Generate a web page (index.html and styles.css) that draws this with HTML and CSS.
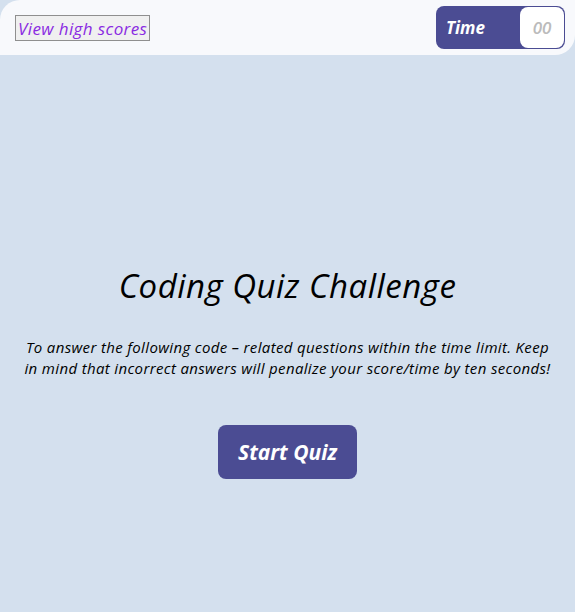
FILE: index.html
```html
<!DOCTYPE html>
<html>
<head>
<meta charset="utf-8">
<link rel="stylesheet" href="styles.css">
</head>
<body>
<header class="top">
  <button class="scores">View high scores</button>
  <div class="timer">
    <span class="timer-label">Time</span>
    <span class="timer-value">00</span>
  </div>
</header>
<main class="intro">
  <h1 class="title">Coding Quiz Challenge</h1>
  <p class="desc">To answer the following code – related questions within the time limit. Keep in mind that incorrect answers will penalize your score/time by ten seconds!</p>
  <button class="start">Start Quiz</button>
</main>
</body>
</html>
```
FILE: styles.css
```css
html, body {
  margin: 0;
  padding: 0;
}
body {
  background: #d4e0ee;
  font-family: "Open Sans", Lato, sans-serif;
  font-style: italic;
  height: 612px;
}
.top {
  display: flex;
  justify-content: space-between;
  align-items: center;
  height: 55px;
  box-sizing: border-box;
  padding: 0 10px 0 15px;
  background: #f8f9fc;
  border-radius: 20px 0 20px 0;
}
.scores {
  font-family: inherit;
  font-style: italic;
  font-size: 17px;
  letter-spacing: 0.4px;
  color: #8a2be2;
  background: #f0f0f0;
  border: 1px solid #8f8f8f;
  padding: 0 2px;
  height: 26px;
  margin-top: 1px;
}
.timer {
  display: flex;
  align-items: stretch;
  background: #4b4c93;
  border-radius: 8px;
  height: 43px;
  width: 129px;
  box-sizing: border-box;
  padding: 1px;
}
.timer-label {
  flex: 1;
  display: flex;
  align-items: center;
  padding-left: 9px;
  color: #fff;
  font-weight: bold;
  font-size: 17px;
}
.timer-value {
  width: 44px;
  display: flex;
  align-items: center;
  justify-content: center;
  background: #fff;
  border-radius: 8px;
  color: #bbb;
  font-size: 17px;
  font-weight: 600;
}
.intro {
  text-align: center;
  padding: 208px 20px 0;
}
.title {
  margin: 0;
  font-size: 33px;
  letter-spacing: 0.5px;
  font-weight: normal;
  color: #000;
  line-height: 46px;
}
.desc {
  margin: 28px 0 0;
  font-size: 15px;
  letter-spacing: 0.35px;
  line-height: 21px;
  color: #000;
}
.start {
  margin-top: 46px;
  font-family: inherit;
  font-style: italic;
  font-weight: bold;
  font-size: 21px;
  color: #fff;
  background: #4b4c93;
  border: none;
  border-radius: 8px;
  width: 139px;
  height: 54px;
}
```
